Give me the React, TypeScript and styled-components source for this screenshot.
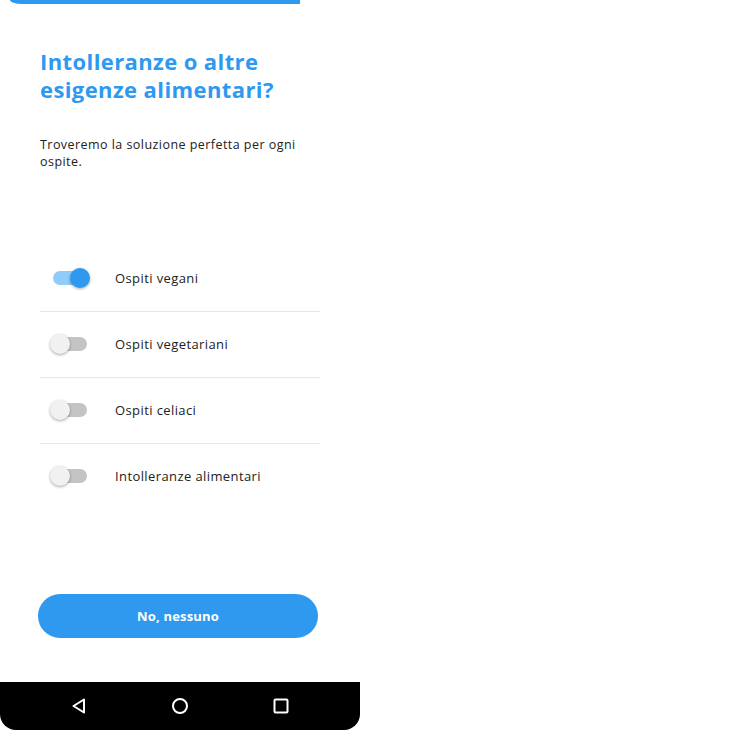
import React, { useState } from "react";
import styled, { createGlobalStyle } from "styled-components";

const Global = createGlobalStyle`
  html, body { margin: 0; padding: 0; background: #fff; }
  body { font-family: "Open Sans", "Liberation Sans", sans-serif; }
`;

const Screen = styled.div`
  width: 360px;
  height: 730px;
  display: flex;
  flex-direction: column;
  background: #fff;
`;

const Progress = styled.div`
  margin-left: 10px;
  width: 290px;
  height: 4px;
  background: #2f99f0;
  border-radius: 0 0 0 12px / 0 0 0 4px;
`;

const Content = styled.div`
  flex: 1;
  display: flex;
  flex-direction: column;
  padding: 0 40px 0 40px;
`;

const Title = styled.h1`
  margin: 43px 0 0 0;
  font-size: 22px;
  line-height: 28px;
  font-weight: 700;
  color: #2f99f0;
  letter-spacing: 0.4px;
`;

const Subtitle = styled.p`
  margin: 33px 0 0 0;
  font-size: 12.5px;
  line-height: 17px;
  color: #222;
  letter-spacing: 0.45px;
`;

const List = styled.div`
  margin-top: 76px;
  display: flex;
  flex-direction: column;
`;

const Row = styled.div<{ $last?: boolean }>`
  height: 66px;
  padding-bottom: 1px;
  display: flex;
  align-items: center;
  border-bottom: ${(p) => (p.$last ? "1px solid transparent" : "1px solid #e6e6e6")};
  box-sizing: border-box;
`;

const SwitchWrap = styled.div`
  position: relative;
  width: 40px;
  height: 20px;
  margin-left: 10px;
  margin-right: 25px;
`;

const Track = styled.div<{ $on: boolean }>`
  position: absolute;
  left: 3px;
  top: 3px;
  width: 34px;
  height: 14px;
  border-radius: 7px;
  background: ${(p) => (p.$on ? "#90cbf9" : "#c4c4c4")};
`;

const Thumb = styled.div<{ $on: boolean }>`
  position: absolute;
  top: 0;
  left: ${(p) => (p.$on ? "20px" : "0px")};
  width: 20px;
  height: 20px;
  border-radius: 50%;
  background: ${(p) => (p.$on ? "#2f99f0" : "#f1f1f1")};
  box-shadow: 0 1px 3px rgba(0, 0, 0, 0.35);
`;

const Label = styled.span`
  font-size: 13px;
  color: #222;
  letter-spacing: 0.4px;
`;

const Spacer = styled.div`
  flex: 1;
`;

const Button = styled.button`
  margin: 0 0 44px -2px;
  width: 280px;
  height: 44px;
  border: none;
  border-radius: 22px;
  background: #2f99f0;
  color: #fff;
  font-family: inherit;
  font-size: 13px;
  font-weight: 700;
  letter-spacing: 0.2px;
`;

const NavBar = styled.div`
  height: 48px;
  background: #000;
  border-radius: 0 0 16px 16px;
  display: grid;
  grid-template-columns: 1fr 1fr 1fr;
  align-items: center;
  justify-items: center;
  padding: 0 28px;
`;

const items = [
  "Ospiti vegani",
  "Ospiti vegetariani",
  "Ospiti celiaci",
  "Intolleranze alimentari",
];

export default function App() {
  const [on, setOn] = useState<boolean[]>([true, false, false, false]);
  return (
    <>
      <Global />
      <Screen>
        <Progress />
        <Content>
          <Title>
            Intolleranze o altre
            <br />
            esigenze alimentari?
          </Title>
          <Subtitle>
            Troveremo la soluzione perfetta per ogni
            <br />
            ospite.
          </Subtitle>
          <List>
            {items.map((t, i) => (
              <Row key={t} $last={i === items.length - 1}>
                <SwitchWrap
                  onClick={() => setOn(on.map((v, j) => (j === i ? !v : v)))}
                >
                  <Track $on={on[i]} />
                  <Thumb $on={on[i]} />
                </SwitchWrap>
                <Label>{t}</Label>
              </Row>
            ))}
          </List>
          <Spacer />
          <Button>No, nessuno</Button>
        </Content>
        <NavBar>
          <svg width="16" height="16" viewBox="0 0 16 16">
            <path d="M13 1.5 L2.5 8 L13 14.5 Z" fill="none" stroke="#fff" strokeWidth="2" strokeLinejoin="round" />
          </svg>
          <svg width="18" height="18" viewBox="0 0 18 18">
            <circle cx="9" cy="9" r="7" fill="none" stroke="#fff" strokeWidth="2" />
          </svg>
          <svg width="16" height="16" viewBox="0 0 16 16">
            <rect x="1.5" y="1.5" width="13" height="13" rx="1" fill="none" stroke="#fff" strokeWidth="2" />
          </svg>
        </NavBar>
      </Screen>
    </>
  );
}
